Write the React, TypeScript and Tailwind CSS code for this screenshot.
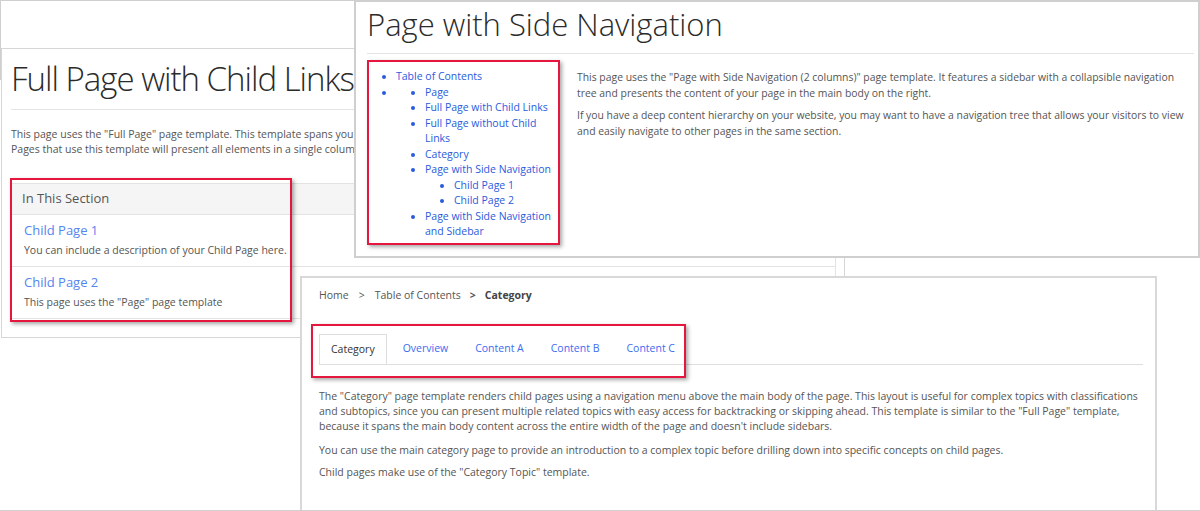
const font = "font-['Open_Sans','Noto_Sans',sans-serif]";

function RedBox({ className }: { className: string }) {
  return (
    <div
      className={`absolute border-2 border-[#e5173f] shadow-[2px_2px_4px_rgba(0,0,0,0.35)] pointer-events-none ${className}`}
    />
  );
}

function FullPageWindow() {
  return (
    <div className="absolute left-[1px] top-[48px] w-[844px] h-[290px] bg-white border border-[#d6d6d6] pl-[9px] pr-[8px]">
      <h1 className="text-[33px] font-light tracking-[-1px] text-[#2b2b2b] leading-none pt-[13px] pb-[14px] border-b border-[#e5e5e5] whitespace-nowrap">
        Full Page with Child Links
      </h1>
      <p className="mt-[17px] text-[10.5px] leading-[15px] text-[#555] whitespace-nowrap">
        This page uses the "Full Page" page template. This template spans your main body content across the entire width of the page.
        <br />
        Pages that use this template will present all elements in a single column and don't include any sidebars.
      </p>
      <div className="mt-[26px] border border-[#e3e3e3]">
        <div className="h-[31px] bg-[#f5f5f5] border-b border-[#e3e3e3] px-[10px] flex items-center text-[13px] text-[#555]">
          In This Section
        </div>
        <div className="px-[12px] pt-[6px] pb-[8px] border-b border-[#e3e3e3]">
          <div className="text-[13px] leading-[19px] text-[#5585ef]">Child Page 1</div>
          <div className="text-[10.5px] leading-[16px] text-[#555] mt-[2px]">You can include a description of your Child Page here.</div>
        </div>
        <div className="px-[12px] pt-[6px] pb-[8px]">
          <div className="text-[13px] leading-[19px] text-[#5585ef]">Child Page 2</div>
          <div className="text-[10.5px] leading-[16px] text-[#555] mt-[2px]">This page uses the "Page" page template</div>
        </div>
      </div>
    </div>
  );
}

function SideNavWindow() {
  const link = "text-[#2a5bdc]";
  return (
    <div className="absolute left-[354px] top-0 w-[846px] h-[258px] bg-white border-2 border-[#cfcfcf] pl-[11px] pr-[4px]">
      <h1 className="text-[31px] font-light text-[#2b2b2b] leading-none pt-[7px] pb-[13px] border-b border-[#e5e5e5] whitespace-nowrap">
        Page with Side Navigation
      </h1>
      <div className="flex mt-[15px] text-[10.5px] leading-[15.5px]">
        <nav className="w-[200px] shrink-0 pl-[3px] pr-[10px]">
          <ul className="list-disc pl-[26px] marker:text-[#2a5bdc]">
            <li className={link}>Table of Contents</li>
            <li>
              <ul className="list-disc pl-[29px]">
                <li className={link}>Page</li>
                <li className={link}>Full Page with Child Links</li>
                <li className={link}>Full Page without Child Links</li>
                <li className={link}>Category</li>
                <li className={link}>
                  Page with Side Navigation
                  <ul className="list-disc pl-[29px]">
                    <li>Child Page 1</li>
                    <li>Child Page 2</li>
                  </ul>
                </li>
                <li className={link}>Page with Side Navigation and Sidebar</li>
              </ul>
            </li>
          </ul>
        </nav>
        <div className="w-[621px] pl-[10px] pt-[1px] text-[10.4px] text-[#555]">
          <p>
            This page uses the "Page with Side Navigation (2 columns)" page template. It features a sidebar with a collapsible navigation
            tree and presents the content of your page in the main body on the right.
          </p>
          <p className="mt-[7px]">
            If you have a deep content hierarchy on your website, you may want to have a navigation tree that allows your visitors to view
            and easily navigate to other pages in the same section.
          </p>
        </div>
      </div>
    </div>
  );
}

function CategoryWindow() {
  const tabs = ["Overview", "Content A", "Content B", "Content C"];
  return (
    <div className="absolute left-[300px] top-[276px] w-[857px] h-[235px] bg-white border-2 border-b-0 border-[#d8d8d8] pl-[17px] pr-[12px]">
      <div className="flex items-center h-[38px] -mt-[1px] text-[10.5px] text-[#555]">
        <span>Home</span>
        <span className="mx-[10px]">&gt;</span>
        <span>Table of Contents</span>
        <span className="mx-[9px] font-bold">&gt;</span>
        <span className="font-bold text-[#444]">Category</span>
      </div>
      <div className="mt-[19px] flex border-b border-[#dedede] text-[10.5px]">
        <div className="px-[11px] h-[30px] flex items-center border border-b-0 border-[#dedede] bg-white text-[#333] -mb-px mr-[5px]">
          Category
        </div>
        {tabs.map((t) => (
          <div key={t} className="px-[11px] h-[30px] flex items-center text-[#3b6cf0] mr-[5px]">
            {t}
          </div>
        ))}
      </div>
      <div className="mt-[24px] text-[10.5px] leading-[15px] text-[#555] w-[822px]">
        <p>
          The "Category" page template renders child pages using a navigation menu above the main body of the page. This layout is useful for complex topics with classifications
          and subtopics, since you can present multiple related topics with easy access for backtracking or skipping ahead. This template is similar to the "Full Page" template,
          because it spans the main body content across the entire width of the page and doesn't include sidebars.
        </p>
        <p className="mt-[9px]">
          You can use the main category page to provide an introduction to a complex topic before drilling down into specific concepts on child pages.
        </p>
        <p className="mt-[7px]">Child pages make use of the "Category Topic" template.</p>
      </div>
    </div>
  );
}

export default function App() {
  return (
    <div className={`relative w-[1200px] h-[511px] overflow-hidden bg-white ${font}`}>
      <div className="absolute left-0 top-0 w-[400px] h-[80px] border border-[#cfcfcf] bg-white" />
      <FullPageWindow />
      <SideNavWindow />
      <CategoryWindow />
      <div className="absolute left-0 bottom-0 w-[1200px] h-px bg-[#d0d0d0]" />
      <RedBox className="left-[10px] top-[178px] w-[282px] h-[144px]" />
      <RedBox className="left-[367px] top-[60px] w-[193px] h-[185px]" />
      <RedBox className="left-[311px] top-[324px] w-[375px] h-[54px]" />
    </div>
  );
}
